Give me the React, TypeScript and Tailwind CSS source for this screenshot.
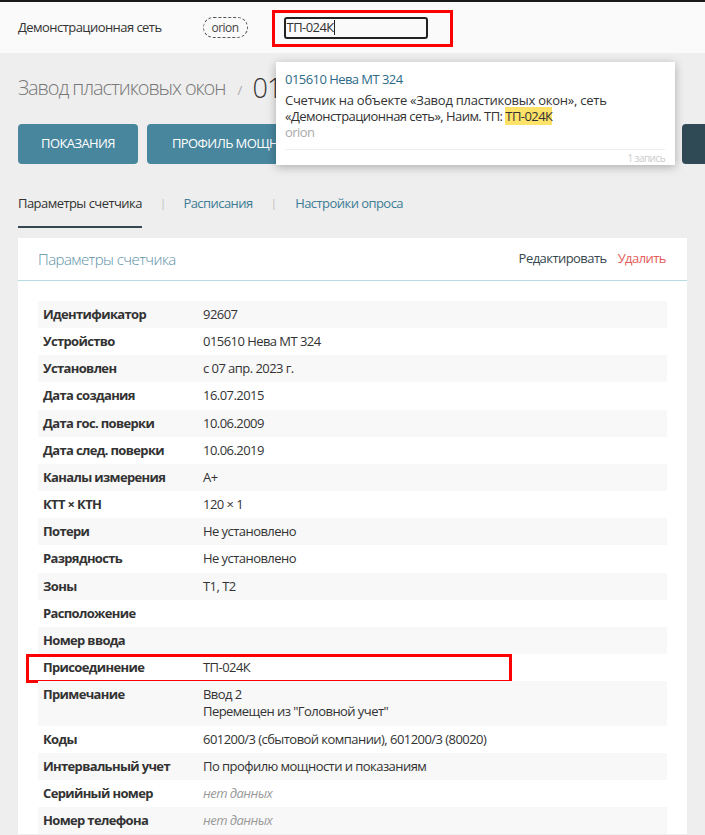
import { Fragment } from 'react';

type Row = { label: string; value?: string[]; empty?: boolean };

const rows: Row[] = [
  { label: 'Идентификатор', value: ['92607'] },
  { label: 'Устройство', value: ['015610 Нева МТ 324'] },
  { label: 'Установлен', value: ['с 07 апр. 2023 г.'] },
  { label: 'Дата создания', value: ['16.07.2015'] },
  { label: 'Дата гос. поверки', value: ['10.06.2009'] },
  { label: 'Дата след. поверки', value: ['10.06.2019'] },
  { label: 'Каналы измерения', value: ['A+'] },
  { label: 'КТТ × КТН', value: ['120 × 1'] },
  { label: 'Потери', value: ['Не установлено'] },
  { label: 'Разрядность', value: ['Не установлено'] },
  { label: 'Зоны', value: ['T1, T2'] },
  { label: 'Расположение' },
  { label: 'Номер ввода' },
  { label: 'Присоединение', value: ['ТП-024К'] },
  { label: 'Примечание', value: ['Ввод 2', 'Перемещен из "Головной учет"'] },
  { label: 'Коды', value: ['601200/3 (сбытовой компании), 601200/3 (80020)'] },
  { label: 'Интервальный учет', value: ['По профилю мощности и показаниям'] },
  { label: 'Серийный номер', empty: true },
  { label: 'Номер телефона', empty: true },
];

export default function App() {
  return (
    <div className="relative min-h-screen bg-[#eeeeee] font-['Open_Sans',sans-serif] tracking-[-0.55px] text-[#333] overflow-hidden">
      {/* Top bar */}
      <div className="h-[53px] bg-[#fafafa] border-t-2 border-[#1a1a1a] flex items-center pl-[18px]">
        <span className="text-[13px]">Демонстрационная сеть</span>
        <span className="ml-[41px] h-[21px] w-[45px] rounded-full border border-dashed border-[#555] text-[12px] text-[#444] flex items-center justify-center">
          orion
        </span>
        <div className="ml-[36px] relative">
          <div className="h-[22px] w-[144px] border-2 border-[#222] rounded-[3px] flex items-center pl-[1px] text-[13px]">
            ТП-024К<span className="w-px h-[15px] bg-[#222]" />
          </div>
          <span className="absolute left-[-12px] top-[-7px] w-[181px] h-[37px] border-[3px] border-[#f00]" />
        </div>
      </div>

      <div className="px-[18px]">
        {/* Title */}
        <div className="pt-[20px] h-[50px] flex items-center whitespace-nowrap">
          <span className="text-[20px] font-light tracking-[-1.1px] text-[#777]">Завод пластиковых окон</span>
          <span className="ml-[12px] text-[13px] text-[#aaa] mt-[6px]">/</span>
          <span className="ml-[11px] text-[27px] font-light tracking-[-1px] text-[#333]">015610 Нева МТ 324</span>
        </div>

        {/* Action buttons */}
        <div className="mt-[21px] flex gap-[9px] whitespace-nowrap">
          <button className="h-[40px] w-[120px] shrink-0 rounded-[4px] bg-[#48869e] text-white text-[13px] font-medium tracking-[-0.6px]">ПОКАЗАНИЯ</button>
          <button className="h-[40px] w-[180px] shrink-0 rounded-[4px] bg-[#48869e] text-white text-[13px] font-medium tracking-[-0.6px] pl-[25px] text-left">ПРОФИЛЬ МОЩНОСТИ</button>
          <button className="h-[40px] w-[164px] shrink-0 rounded-[4px] bg-[#48869e] text-white text-[13px] font-medium">ЖУРНАЛ СОБЫТИЙ</button>
          <button className="h-[40px] w-[164px] shrink-0 rounded-[4px] bg-[#48869e] text-white text-[13px] font-medium">ПАРАМЕТРЫ</button>
          <button className="h-[40px] w-[120px] shrink-0 rounded-[4px] bg-[#304a55] text-white text-[13px] font-medium">ЕЩЁ</button>
        </div>

        {/* Tabs */}
        <div className="mt-[29px] flex items-start text-[13px] whitespace-nowrap">
          <span className="leading-[20px] pb-[13px] border-b-2 border-[#37474f] text-[#333]">Параметры счетчика</span>
          <span className="mx-[18px] leading-[20px] text-[#bbb] text-[11px]">|</span>
          <span className="leading-[20px] text-[#3d7c96]">Расписания</span>
          <span className="ml-[18px] mr-[19px] leading-[20px] text-[#bbb] text-[11px]">|</span>
          <span className="leading-[20px] text-[#3d7c96]">Настройки опроса</span>
        </div>

        {/* Card */}
        <div className="mt-[10px] bg-white">
          <div className="h-[43px] px-[20px] flex items-center justify-between border-b border-[#b5dbe3]">
            <span className="text-[15px] font-light text-[#5d91a7]">Параметры счетчика</span>
            <div className="flex gap-[11px] text-[13px] mr-[1px]">
              <span className="text-[#37474f]">Редактировать</span>
              <span className="text-[#e25c5c]">Удалить</span>
            </div>
          </div>
          <div className="px-[20px] pt-[20px] text-[13px]">
            {rows.map((r, i) => (
              <div key={r.label} className={`relative flex py-[5px] leading-[17.15px] ${i % 2 === 0 ? 'bg-[#f8f8f8]' : ''}`}>
                <div className="w-[165px] shrink-0 pl-[5px] font-bold tracking-[-0.65px] text-[#333]">{r.label}</div>
                <div className="text-[#333]">
                  {r.empty ? (
                    <span className="italic text-[#999]">нет данных</span>
                  ) : (
                    r.value?.map((v, j) => (
                      <Fragment key={j}>
                        {j > 0 && <br />}
                        {v}
                      </Fragment>
                    ))
                  )}
                </div>
                {r.label === 'Присоединение' && (
                  <span className="absolute left-[-12px] top-0 w-[486px] h-[29px] border-[3px] border-[#f00]" />
                )}
              </div>
            ))}
          </div>
        </div>
      </div>

      {/* Search dropdown */}
      <div className="absolute left-[276px] top-[62px] w-[399px] bg-white shadow-[0_2px_9px_rgba(0,0,0,0.28)] pl-[9px] pr-[10px] pt-[9px]">
        <div className="text-[13px] leading-[17px] text-[#2e6b88]">015610 Нева МТ 324</div>
        <div className="mt-[4px] text-[13px] leading-[16px] text-[#333]">
          <div className="tracking-[-0.25px]">Счетчик на объекте «Завод пластиковых окон», сеть</div>
          <div>
            «Демонстрационная сеть», Наим. ТП: <span className="bg-[#ffe268]">ТП-024К</span>
          </div>
        </div>
        <div className="text-[13px] leading-[17px] text-[#aaa]">orion</div>
        <div className="mt-[8px] border-t border-[#eee] pt-[1px] text-right text-[10px] leading-[14px] text-[#ccc]">1 запись</div>
      </div>
    </div>
  );
}
